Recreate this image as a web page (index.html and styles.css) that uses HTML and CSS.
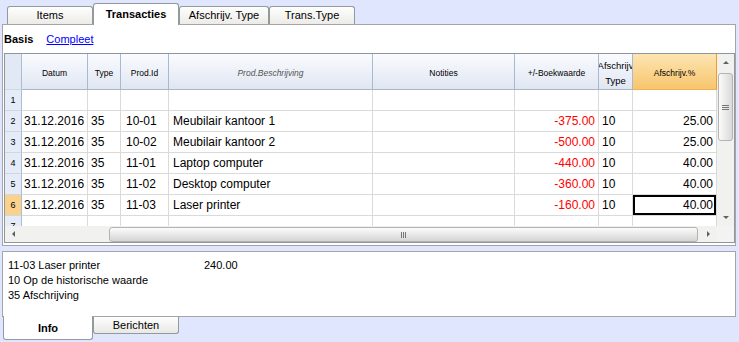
FILE: index.html
```html
<!DOCTYPE html>
<html lang="nl">
<head>
  <meta charset="UTF-8">
  <title>Transacties</title>
  <link rel="stylesheet" href="styles.css">
</head>
<body>
  <div class="top-tabs">
    <div class="tab">Items</div>
    <div class="tab active">Transacties</div>
    <div class="tab wide">Afschrijv. Type</div>
    <div class="tab">Trans.Type</div>
  </div>

  <div class="panel main">
    <div class="views">
      <b>Basis</b>
      <a href="#">Compleet</a>
    </div>

    <div class="grid">
      <div class="grid-main">
        <div class="table-wrap">
          <table>
            <colgroup>
              <col style="width:17px">
              <col style="width:66px">
              <col style="width:33px">
              <col style="width:48px">
              <col style="width:204px">
              <col style="width:142px">
              <col style="width:84px">
              <col style="width:34px">
              <col style="width:84px">
            </colgroup>
            <thead>
              <tr>
                <th class="rn"></th>
                <th>Datum</th>
                <th>Type</th>
                <th>Prod.Id</th>
                <th class="muted">Prod.Beschrijving</th>
                <th>Notities</th>
                <th>+/-Boekwaarde</th>
                <th><span class="clip">Afschrijv<br>Type</span></th>
                <th class="hl">Afschrijv.%</th>
              </tr>
            </thead>
            <tbody>
              <tr>
                <td class="rn">1</td><td></td><td></td><td></td><td></td><td></td><td></td><td></td><td></td>
              </tr>
              <tr>
                <td class="rn">2</td><td class="date">31.12.2016</td><td>35</td><td class="pid">10-01</td><td class="desc">Meubilair kantoor 1</td><td></td><td class="num neg">-375.00</td><td>10</td><td class="num">25.00</td>
              </tr>
              <tr>
                <td class="rn">3</td><td class="date">31.12.2016</td><td>35</td><td class="pid">10-02</td><td class="desc">Meubilair kantoor 2</td><td></td><td class="num neg">-500.00</td><td>10</td><td class="num">25.00</td>
              </tr>
              <tr>
                <td class="rn">4</td><td class="date">31.12.2016</td><td>35</td><td class="pid">11-01</td><td class="desc">Laptop computer</td><td></td><td class="num neg">-440.00</td><td>10</td><td class="num">40.00</td>
              </tr>
              <tr>
                <td class="rn">5</td><td class="date">31.12.2016</td><td>35</td><td class="pid">11-02</td><td class="desc">Desktop computer</td><td></td><td class="num neg">-360.00</td><td>10</td><td class="num">40.00</td>
              </tr>
              <tr>
                <td class="rn sel">6</td><td class="date">31.12.2016</td><td>35</td><td class="pid">11-03</td><td class="desc">Laser printer</td><td></td><td class="num neg">-160.00</td><td>10</td><td class="num current">40.00</td>
              </tr>
              <tr>
                <td class="rn">7</td><td></td><td></td><td></td><td></td><td></td><td></td><td></td><td></td>
              </tr>
            </tbody>
          </table>
        </div>

        <div class="vscroll">
          <div class="sb-btn"><span class="arr up"></span></div>
          <div class="vtrack">
            <div class="vthumb"><span class="grip-h"></span></div>
          </div>
          <div class="sb-btn"><span class="arr down"></span></div>
        </div>
      </div>

      <div class="grid-foot">
        <div class="hscroll">
          <div class="sb-btn"><span class="arr left"></span></div>
          <div class="htrack">
            <div class="hthumb"><span class="grip-v"></span></div>
          </div>
          <div class="sb-btn"><span class="arr right"></span></div>
        </div>
        <div class="corner"></div>
      </div>
    </div>
  </div>

  <div class="panel info">
    <div class="info-line"><span class="info-key">11-03 Laser printer</span><span>240.00</span></div>
    <div class="info-line"><span class="info-key">10 Op de historische waarde</span></div>
    <div class="info-line"><span class="info-key">35 Afschrijving</span></div>
  </div>

  <div class="bottom-tabs">
    <div class="btab active">Info</div>
    <div class="btab">Berichten</div>
  </div>
</body>
</html>
```

FILE: styles.css
```css
body {
  margin: 0;
  width: 739px;
  height: 342px;
  overflow: hidden;
  background: #dfe6fd;
  font-family: "Liberation Sans", Arial, sans-serif;
  font-size: 11px;
  color: #000;
}

/* top tab strip */
.top-tabs {
  display: flex;
  align-items: flex-end;
  height: 24px;
  padding-left: 7px;
}
.tab {
  box-sizing: border-box;
  width: 86px;
  height: 18px;
  border: 1px solid #919b9c;
  border-bottom: 0;
  border-radius: 3px 3px 0 0;
  background: linear-gradient(#fefefe, #ecebe6);
  text-align: center;
  line-height: 17px;
}
.tab.wide {
  width: 90px;
}
.top-tabs .tab.active {
  height: 22px;
  margin-bottom: -1px;
  position: relative;
  z-index: 1;
  background: #fff;
  font-weight: bold;
  line-height: 21px;
}

/* panels */
.panel {
  box-sizing: border-box;
  width: 734px;
  margin-left: 2px;
  border: 1px solid #a5a5a5;
  background: #fff;
}
.main {
  height: 222px;
  padding-left: 1px;
}
.views {
  display: flex;
  align-items: center;
  gap: 13px;
  height: 28px;
}
.views a {
  color: #0000ff;
}

/* grid */
.grid {
  box-sizing: border-box;
  width: 731px;
  height: 190px;
  border: 1px solid #8f969e;
}
.grid-main {
  display: flex;
  height: 172px;
}
.table-wrap {
  width: 712px;
  overflow: hidden;
}
table {
  border-collapse: separate;
  border-spacing: 0;
  table-layout: fixed;
  width: 712px;
  font-size: 12px;
}
th, td {
  box-sizing: border-box;
  padding: 0 3px;
  border-right: 1px solid #dadada;
  border-bottom: 1px solid #dadada;
  white-space: nowrap;
  overflow: hidden;
}
thead tr {
  height: 36px;
}
tbody tr {
  height: 21px;
}
th {
  padding: 3px 0 0;
  font-size: 8.5px;
  font-weight: normal;
  line-height: 15px;
  text-align: center;
  background: linear-gradient(#fafbff, #e0e6f2);
  border-right-color: #a6bbd2;
  border-bottom-color: #a9b6c6;
}
th.muted {
  font-style: italic;
  color: #555;
}
th.hl {
  background: linear-gradient(#fde5b3, #f8c56c);
  border-right-color: #f19b2c;
  border-bottom-color: #eeb15a;
}
.clip {
  display: block;
  margin: 0 -8px;
  font-size: 9.5px;
}
.rn {
  padding: 0;
  text-align: center;
  font-size: 9px;
  background: #e5ecf7;
  border-right-color: #a9bed5;
  border-bottom-color: #ccd8e6;
}
th.rn {
  background: #e2e9f5;
}
.rn.sel {
  background: #fbd28c;
}
td.date {
  padding-left: 2px;
}
td.pid {
  padding-left: 5px;
}
td.desc {
  padding-left: 4px;
}
td.num {
  text-align: right;
}
td.neg {
  color: #ff0000;
}
td.current {
  box-shadow: inset 0 0 0 2px #000;
}

/* scrollbars */
.vscroll {
  display: flex;
  flex-direction: column;
  width: 17px;
  background: #f1f1ef;
}
.sb-btn {
  flex: none;
  display: flex;
  align-items: center;
  justify-content: center;
  width: 17px;
  height: 17px;
}
.vtrack {
  flex: 1;
}
.vthumb {
  box-sizing: border-box;
  display: flex;
  align-items: center;
  justify-content: center;
  width: 15px;
  height: 68px;
  margin: 2px 0 0 1px;
  border: 1px solid #b3b3b3;
  border-radius: 3px;
  background: linear-gradient(90deg, #fbfbfb, #d9d9d9);
}
.grip-h {
  width: 7px;
  height: 5px;
  background: repeating-linear-gradient(#777 0 1px, transparent 1px 2px);
}
.grid-foot {
  display: flex;
  height: 16px;
}
.hscroll {
  display: flex;
  width: 712px;
  background: #f1f1ef;
}
.hscroll .sb-btn {
  height: 16px;
}
.htrack {
  flex: 1;
}
.hthumb {
  box-sizing: border-box;
  display: flex;
  align-items: center;
  justify-content: center;
  width: 589px;
  height: 15px;
  margin: 1px 0 0 87px;
  border: 1px solid #b3b3b3;
  border-radius: 3px;
  background: linear-gradient(#fcfcfc, #d5d5d5);
}
.grip-v {
  width: 5px;
  height: 6px;
  background: repeating-linear-gradient(90deg, #777 0 1px, transparent 1px 2px);
}
.corner {
  width: 17px;
  background: #f3f3f3;
}
.arr {
  width: 0;
  height: 0;
  border: 3px solid transparent;
}
.arr.up {
  border-top: 0;
  border-bottom-color: #606060;
}
.arr.down {
  border-bottom: 0;
  border-top-color: #606060;
}
.arr.left {
  border-left: 0;
  border-right-color: #606060;
}
.arr.right {
  border-right: 0;
  border-left-color: #606060;
}

/* info panel */
.info {
  height: 66px;
  margin-top: 5px;
  padding: 6px 0 0 5px;
  line-height: 15px;
}
.info-line {
  display: flex;
}
.info-key {
  width: 196px;
}

/* bottom tabs */
.bottom-tabs {
  display: flex;
  align-items: flex-start;
  padding-left: 3px;
}
.btab {
  box-sizing: border-box;
  width: 86px;
  height: 17px;
  border: 1px solid #919b9c;
  border-top: 0;
  border-radius: 0 0 3px 3px;
  background: linear-gradient(#fefefe, #e9e8e3);
  text-align: center;
  line-height: 17px;
}
.btab.active {
  width: 90px;
  height: 24px;
  margin-top: -1px;
  position: relative;
  z-index: 1;
  background: #fff;
  font-weight: bold;
  line-height: 25px;
}
```
